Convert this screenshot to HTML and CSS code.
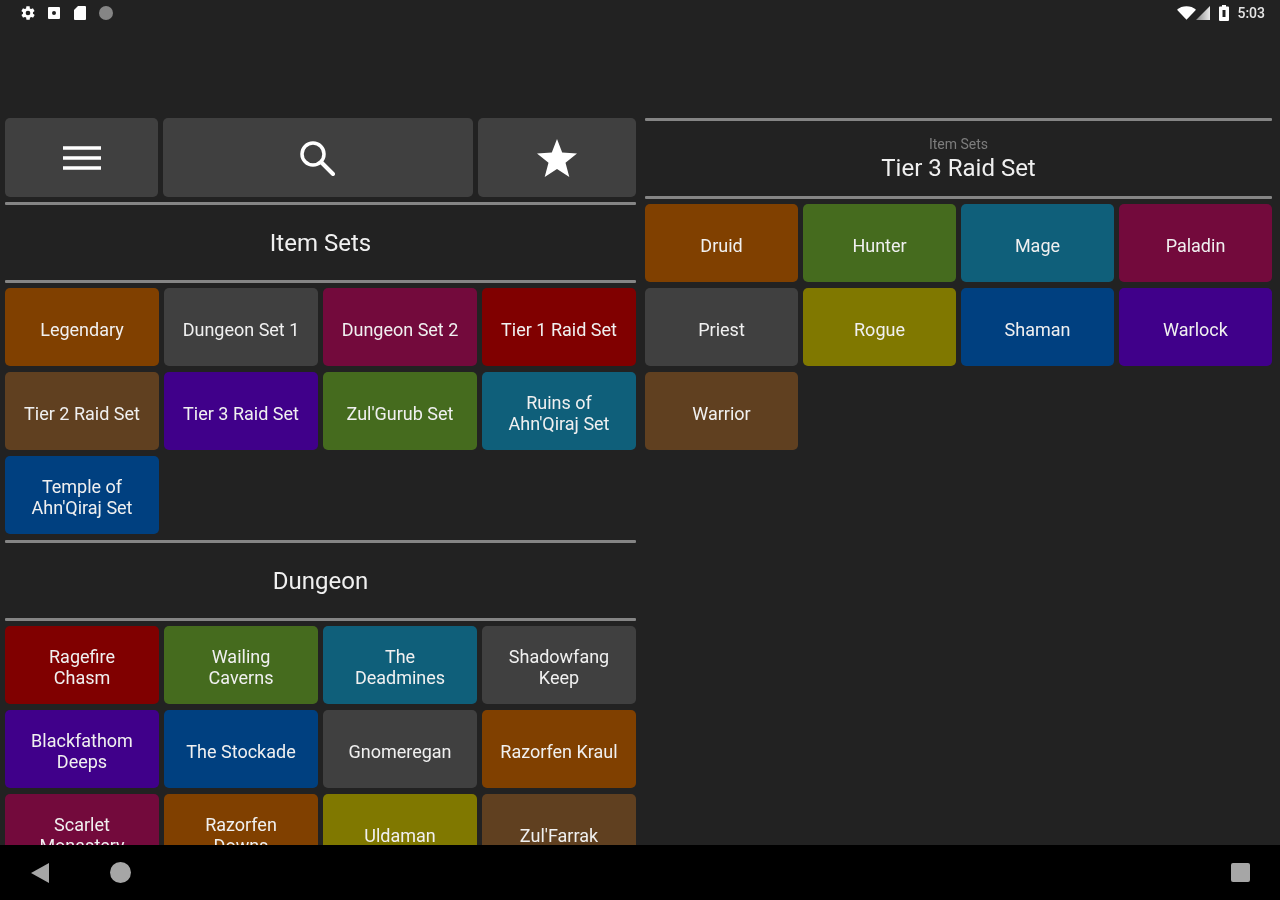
FILE: index.html
```html
<!DOCTYPE html>
<html lang="en">
<head>
<meta charset="utf-8">
<title>Item Sets</title>
<link rel="stylesheet" href="styles.css">
</head>
<body>
<div class="screen">
  <header class="status">
    <div class="status-group left">
      <svg class="si" viewBox="0 0 24 24" width="16" height="16"><path fill="#fff" fill-rule="evenodd" d="M19.4 13c.1-.3.1-.7.1-1s0-.7-.1-1l2.1-1.600c.2-.2.2-.4.1-.6l-2-3.500c-.1-.2-.4-.3-.6-.2l-2.500 1c-.5-.4-1.100-.7-1.700-1L14.500 2.400c0-.2-.2-.4-.5-.4h-4c-.2 0-.5.2-.5.4L9.100 5.100c-.6.200-1.100.6-1.700 1l-2.500-1c-.2-.1-.5 0-.6.2l-2 3.500c-.1.200-.1.500.1.600L4.600 11c0 .3-.1.700-.1 1s0 .7.100 1l-2.100 1.600c-.2.200-.2.400-.1.600l2 3.500c.1.200.4.300.6.200l2.500-1c.5.400 1.100.7 1.700 1l.4 2.700c0 .2.300.4.500.4h4c.3 0 .5-.2.5-.4l.4-2.700c.6-.2 1.100-.6 1.700-1l2.500 1c.2.100.5 0 .6-.2l2-3.500c.1-.2.100-.4-.1-.6zM12 15.500a3.500 3.500 0 1 1 0-7 3.500 3.500 0 0 1 0 7z"/></svg>
      <svg class="si" viewBox="0 0 16 16" width="16" height="16"><path fill="#fff" fill-rule="evenodd" d="M3 2h10a1 1 0 0 1 1 1v10a1 1 0 0 1-1 1H3a1 1 0 0 1-1-1V3a1 1 0 0 1 1-1zm5 4a2 2 0 1 0 0 4 2 2 0 0 0 0-4z"/></svg>
      <svg class="si" viewBox="0 0 16 16" width="16" height="16"><path fill="#fff" d="M6 1h7a1 1 0 0 1 1 1v12a1 1 0 0 1-1 1H3a1 1 0 0 1-1-1V5z"/></svg>
      <svg class="si" viewBox="0 0 16 16" width="16" height="16"><circle cx="8" cy="8" r="7" fill="#858585"/></svg>
    </div>
    <div class="status-group right">
      <svg viewBox="0 0 20 14" width="19" height="14"><path fill="#fff" d="M0 3.500C2.800 1.200 6.200 0 10 0s7.200 1.200 10 3.500L10 14z"/></svg>
      <svg class="signal" viewBox="0 0 14 14" width="14" height="14"><defs><linearGradient id="sig" x1="0" x2="1" y1="0" y2="0"><stop offset="0" stop-color="#888"/><stop offset="1" stop-color="#e8e8e8"/></linearGradient></defs><path fill="url(#sig)" d="M0 14 14 0v14z"/></svg>
      <svg class="battery" viewBox="0 0 10 16" width="10" height="16"><path fill="#fff" fill-rule="evenodd" d="M3 0h4v1.500h2a1 1 0 0 1 1 1V15a1 1 0 0 1-1 1H1a1 1 0 0 1-1-1V2.500a1 1 0 0 1 1-1h2zM3.500 5v7h3V5z"/></svg>
      <span class="clock">5:03</span>
    </div>
  </header>

  <main class="content">
    <section class="pane">
      <div class="toolbar">
        <button class="tool tool-menu" aria-label="Menu">
          <svg viewBox="0 0 38 26" width="38" height="26"><path stroke="#fff" stroke-width="3.500" d="M0 3h38M0 13h38M0 23h38"/></svg>
        </button>
        <button class="tool tool-search" aria-label="Search">
          <svg class="search-icon" viewBox="0 0 36 36" width="36" height="36"><circle cx="14" cy="14" r="11" fill="none" stroke="#fff" stroke-width="3.500"/><path stroke="#fff" stroke-width="4" stroke-linecap="round" d="M22.500 22.500 34 34"/></svg>
        </button>
        <button class="tool tool-star" aria-label="Favorites">
          <svg viewBox="0 0 40 38" width="40" height="38"><path fill="#fff" d="M20 0l5.200 13.600 14.800.8-11.500 9.300L32.300 38 20 30 7.700 38l3.800-14.300L0 14.400l14.800-.8z"/></svg>
        </button>
      </div>
      <hr class="rule">
      <h2 class="heading">Item Sets</h2>
      <hr class="rule">
      <div class="grid">
        <a class="tile orange">Legendary</a>
        <a class="tile gray">Dungeon Set 1</a>
        <a class="tile magenta">Dungeon Set 2</a>
        <a class="tile red">Tier 1 Raid Set</a>
        <a class="tile brown">Tier 2 Raid Set</a>
        <a class="tile purple">Tier 3 Raid Set</a>
        <a class="tile green">Zul'Gurub Set</a>
        <a class="tile teal">Ruins of<br>Ahn'Qiraj Set</a>
        <a class="tile blue">Temple of<br>Ahn'Qiraj Set</a>
      </div>
      <hr class="rule">
      <h2 class="heading">Dungeon</h2>
      <hr class="rule">
      <div class="grid">
        <a class="tile red">Ragefire<br>Chasm</a>
        <a class="tile green">Wailing<br>Caverns</a>
        <a class="tile teal">The<br>Deadmines</a>
        <a class="tile gray">Shadowfang<br>Keep</a>
        <a class="tile purple">Blackfathom<br>Deeps</a>
        <a class="tile blue">The Stockade</a>
        <a class="tile gray">Gnomeregan</a>
        <a class="tile orange">Razorfen Kraul</a>
        <a class="tile magenta">Scarlet<br>Monastery</a>
        <a class="tile orange">Razorfen<br>Downs</a>
        <a class="tile olive">Uldaman</a>
        <a class="tile brown">Zul'Farrak</a>
      </div>
    </section>

    <section class="pane">
      <hr class="rule">
      <div class="subheading">
        <span class="crumb">Item Sets</span>
        <h1 class="subtitle">Tier 3 Raid Set</h1>
      </div>
      <hr class="rule">
      <div class="grid">
        <a class="tile orange">Druid</a>
        <a class="tile green">Hunter</a>
        <a class="tile teal">Mage</a>
        <a class="tile magenta">Paladin</a>
        <a class="tile gray">Priest</a>
        <a class="tile olive">Rogue</a>
        <a class="tile blue">Shaman</a>
        <a class="tile purple">Warlock</a>
        <a class="tile brown">Warrior</a>
      </div>
    </section>
  </main>

  <nav class="navbar">
    <svg viewBox="0 0 18 20" width="18" height="20"><path fill="#a6a6a6" d="M0 10 18 0v20z"/></svg>
    <span class="nav-home"></span>
    <span class="nav-recent"></span>
  </nav>
</div>
</body>
</html>
```

FILE: styles.css
```css
* { box-sizing: border-box; }
html, body { margin: 0; padding: 0; }
body {
  width: 1280px;
  height: 900px;
  overflow: hidden;
  background: #222222;
  font-family: Roboto, "Liberation Sans", sans-serif;
  color: #f0f0f0;
}
.screen {
  width: 1280px;
  height: 900px;
  display: flex;
  flex-direction: column;
  background: #222222;
  filter: blur(0.7px);
}
.status {
  height: 118px;
  flex: none;
  display: flex;
  justify-content: space-between;
  align-items: flex-start;
  padding: 5px 15px 0 20px;
}
.status-group { display: flex; align-items: center; height: 16px; }
.status-group.left { gap: 10px; }
.signal { margin-right: 9px; }
.battery { margin-right: 8px; }
.clock { font-size: 14px; font-weight: 500; color: #e6e6e6; }
.content {
  flex: 1;
  min-height: 0;
  overflow: hidden;
  display: grid;
  grid-template-columns: 631px 627px;
  column-gap: 9px;
  padding-left: 5px;
  align-items: start;
}
.pane { min-width: 0; }
.toolbar {
  display: grid;
  grid-template-columns: 153px 1fr 158px;
  column-gap: 5px;
  height: 79px;
  margin-bottom: 5px;
}
.tool {
  border: 0;
  padding: 0;
  background: #404040;
  border-radius: 5px;
  display: flex;
  align-items: center;
  justify-content: center;
}
.search-icon { margin-right: 2px; }
.rule {
  height: 3px;
  margin: 0;
  border: 0;
  background: #858585;
  border-radius: 1px;
}
.heading {
  margin: 0;
  height: 75px;
  display: flex;
  align-items: center;
  justify-content: center;
  font-size: 24px;
  font-weight: 400;
  color: #f0f0f0;
}
.subheading {
  height: 75px;
  display: flex;
  flex-direction: column;
  align-items: center;
  justify-content: center;
}
.crumb { font-size: 14px; line-height: 18px; color: #7d7d7d; }
.subtitle { margin: 0; font-size: 24px; line-height: 30px; font-weight: 400; color: #f0f0f0; }
.grid {
  display: grid;
  grid-template-columns: repeat(4, 1fr);
  gap: 6px 5px;
  padding: 5px 0 6px;
}
.tile {
  height: 78px;
  padding-top: 4px;
  border-radius: 5px;
  display: flex;
  align-items: center;
  justify-content: center;
  text-align: center;
  font-size: 18px;
  line-height: 21px;
  color: #f0f0f0;
}
.orange { background: #804000; }
.gray { background: #404040; }
.magenta { background: #730a3c; }
.red { background: #800000; }
.brown { background: #604020; }
.purple { background: #40008a; }
.green { background: #456b1e; }
.teal { background: #0f5f7a; }
.blue { background: #004080; }
.olive { background: #807800; }
.navbar {
  height: 55px;
  flex: none;
  background: #000;
  display: flex;
  align-items: center;
  padding: 0 30px 0 31px;
}
.nav-home {
  width: 21px;
  height: 21px;
  margin-left: 61px;
  border-radius: 50%;
  background: #a6a6a6;
}
.nav-recent {
  width: 19px;
  height: 19px;
  margin-left: auto;
  border-radius: 2px;
  background: #a6a6a6;
}
```
